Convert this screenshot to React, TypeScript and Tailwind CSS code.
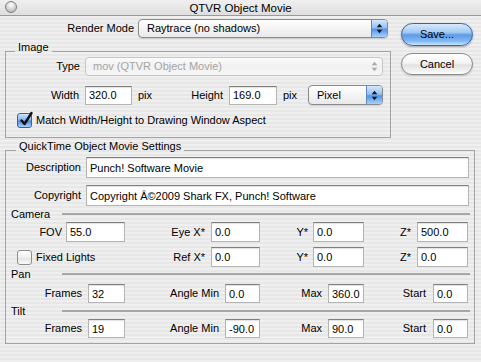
import React from "react";

function Arrows({ disabled }: { disabled?: boolean }) {
  return (
    <svg width="7" height="11" viewBox="0 0 7 11">
      <path d="M3.5 0.8 L6.3 4.2 L0.7 4.2 Z M3.5 10.2 L6.3 6.8 L0.7 6.8 Z" fill={disabled ? "#a9a9a9" : "#151515"} />
    </svg>
  );
}

function Popup({ text, cls, disabled }: { text: string; cls: string; disabled?: boolean }) {
  if (disabled) {
    return (
      <div className={`flex overflow-hidden rounded-[4px] border border-[#c6c6c6] bg-[linear-gradient(180deg,#fbfbfb_0%,#f1f1f1_50%,#f7f7f7_100%)] text-[#a4a4a4] ${cls}`}>
        <div className="flex flex-1 items-center pl-[7px]">{text}</div>
        <div className="flex w-[16px] items-center justify-center">
          <Arrows disabled />
        </div>
      </div>
    );
  }
  return (
    <div className={`flex overflow-hidden rounded-[4px] border border-[#8a8a8a] bg-[linear-gradient(180deg,#ffffff_0%,#f4f4f4_50%,#e9e9e9_100%)] shadow-[0_1px_1px_rgba(0,0,0,0.12)] ${cls}`}>
      <div className="flex flex-1 items-center pl-[8px]">{text}</div>
      <div className="flex w-[16px] items-center justify-center border-l border-[#5f86c2] bg-[linear-gradient(180deg,#d6e8fc_0%,#94c0f3_45%,#5294e8_55%,#a6d2fb_100%)]">
        <Arrows />
      </div>
    </div>
  );
}

function Input({ value, cls }: { value: string; cls: string }) {
  return (
    <input
      readOnly
      defaultValue={value}
      className={`box-border border border-[#b4b4b4] border-t-[#7f7f7f] bg-white pl-[3px] text-[11px] text-black shadow-[inset_0_1px_1px_rgba(0,0,0,0.12)] outline-none ${cls}`}
    />
  );
}

function Check({ checked }: { checked?: boolean }) {
  if (checked) {
    return (
      <div className="relative h-[15px] w-[15px] shrink-0 rounded-[3px] border border-[#3f5f97] bg-[linear-gradient(180deg,#cfe3fb_0%,#86b5ef_45%,#4c8be4_55%,#a8d3fb_100%)]">
        <svg className="absolute left-[1px] top-[-3px]" width="15" height="16" viewBox="0 0 15 16">
          <path d="M2.5 9.5 L5.5 13 L12.5 2" fill="none" stroke="#111" strokeWidth="2.4" strokeLinecap="round" strokeLinejoin="round" />
        </svg>
      </div>
    );
  }
  return (
    <div className="h-[15px] w-[15px] shrink-0 rounded-[3px] border border-[#8d8d8d] bg-[linear-gradient(180deg,#ffffff_0%,#efefef_50%,#e4e4e4_60%,#fafafa_100%)]" />
  );
}

function Field({ label, value, cls }: { label: string; value: string; cls: string }) {
  return (
    <>
      <span>{label}</span>
      <Input value={value} cls={cls} />
    </>
  );
}

function Section({ label }: { label: string }) {
  return (
    <div className="flex h-[14px] items-center">
      <div className="w-[56px] pl-[5px]">{label}</div>
      <div className="mr-[4px] h-[2px] flex-1 bg-[#a6a6a6]" />
    </div>
  );
}

export default function App() {
  return (
    <div className="h-[362px] w-[481px] overflow-hidden bg-[repeating-linear-gradient(180deg,#efefef_0px,#efefef_2px,#e7e7e7_2px,#e7e7e7_4px)] bg-fixed font-['Liberation_Sans',Arial,sans-serif] text-[11px] leading-[13px] text-black">
      {/* Title bar */}
      <div className="relative flex h-[16px] items-center justify-center border-b border-[#9a9a9a] bg-[linear-gradient(180deg,#f0f0f0_0%,#dedede_100%)]">
        <div className="absolute left-[5px] top-[1px] h-[12px] w-[12px] rounded-full border border-[#7f7f7f] bg-[radial-gradient(circle_at_50%_30%,#ffffff_0%,#dadada_45%,#a6a6a6_100%)]" />
        <span className="text-[11.5px] leading-[14px]">QTVR Object Movie</span>
      </div>

      <div className="px-[5px]">
        <div className="flex items-start">
          {/* left column */}
          <div className="w-[386px]">
            <div className="mt-[3px] flex h-[19px] items-center">
              <div className="w-[129px] text-right">Render Mode</div>
              <Popup text="Raytrace (no shadows)" cls="ml-[4px] h-[19px] w-[250px]" />
            </div>

            <fieldset className="mt-[7px] w-[386px] border border-[#a3a3a3] pb-[9px]">
              <legend className="ml-[9px] -translate-y-[4px] px-[3px] leading-[12px]">Image</legend>
              <div className="flex h-[19px] items-center">
                <div className="w-[74px] text-right">Type</div>
                <Popup text="mov (QTVR Object Movie)" cls="ml-[5px] h-[19px] w-[298px]" disabled />
              </div>
              <div className="mt-[9px] flex h-[20px] items-center">
                <div className="w-[73px] text-right">Width</div>
                <Input value="320.0" cls="ml-[6px] h-[19px] w-[47px]" />
                <div className="flex w-[91px] justify-between pl-[6px]">
                  <span>pix</span>
                  <span>Height</span>
                </div>
                <Input value="169.0" cls="ml-[6px] h-[19px] w-[48px]" />
                <div className="w-[31px] pl-[6px]">pix</div>
                <Popup text="Pixel" cls="h-[20px] w-[75px]" />
              </div>
              <div className="mt-[8px] flex h-[15px] items-center pl-[11px]">
                <Check checked />
                <span className="ml-[4px]">Match Width/Height to Drawing Window Aspect</span>
              </div>
            </fieldset>
          </div>

          {/* buttons */}
          <div className="ml-[10px] flex flex-col">
            <div className="mt-[7px] flex h-[23px] w-[72px] items-center justify-center rounded-full border border-[#3b64a6] bg-[linear-gradient(180deg,#d9eafc_0%,#a2c9f4_40%,#5e9be8_52%,#7fb6f2_80%,#c6e5ff_100%)] shadow-[0_1px_2px_rgba(0,0,0,0.3)]">
              Save...
            </div>
            <div className="mt-[7px] flex h-[22px] w-[72px] items-center justify-center rounded-full border border-[#8b8b8b] bg-[linear-gradient(180deg,#ffffff_0%,#f3f3f3_45%,#e2e2e2_55%,#f2f2f2_85%,#ffffff_100%)] shadow-[0_1px_2px_rgba(0,0,0,0.2)]">
              Cancel
            </div>
          </div>
        </div>

        <fieldset className="mt-[6px] w-[470px] border border-[#a3a3a3] pb-[5px]">
          <legend className="ml-[10px] -translate-y-[4px] px-[3px] leading-[12px]">QuickTime Object Movie Settings</legend>
          <div className="mt-[1px] flex h-[21px] items-center">
            <div className="w-[75px] text-right">Description</div>
            <Input value="Punch! Software Movie" cls="ml-[5px] h-[21px] w-[383px]" />
          </div>
          <div className="mt-[7px] flex h-[21px] items-center">
            <div className="w-[75px] text-right">Copyright</div>
            <Input value="Copyright Â©2009 Shark FX, Punch! Software" cls="ml-[5px] h-[21px] w-[383px]" />
          </div>

          <div className="mt-[1px]">
            <Section label="Camera" />
          </div>
          <div className="mt-[1px] flex h-[20px] items-center">
            <div className="flex w-[119px] items-center justify-end gap-[4px]">
              <Field label="FOV" value="55.0" cls="h-[20px] w-[59px]" />
            </div>
            <div className="flex w-[135px] items-center justify-end gap-[6px]">
              <Field label="Eye X*" value="0.0" cls="h-[20px] w-[49px]" />
            </div>
            <div className="flex w-[104px] items-center justify-end gap-[5px]">
              <Field label="Y*" value="0.0" cls="h-[20px] w-[51px]" />
            </div>
            <div className="flex w-[104px] items-center justify-end gap-[6px]">
              <Field label="Z*" value="500.0" cls="h-[20px] w-[51px]" />
            </div>
          </div>
          <div className="mt-[5px] flex h-[20px] items-center">
            <div className="flex w-[119px] items-center pl-[11px]">
              <Check />
              <span className="ml-[4px]">Fixed Lights</span>
            </div>
            <div className="flex w-[135px] items-center justify-end gap-[6px]">
              <Field label="Ref X*" value="0.0" cls="h-[20px] w-[49px]" />
            </div>
            <div className="flex w-[104px] items-center justify-end gap-[5px]">
              <Field label="Y*" value="0.0" cls="h-[20px] w-[51px]" />
            </div>
            <div className="flex w-[104px] items-center justify-end gap-[6px]">
              <Field label="Z*" value="0.0" cls="h-[20px] w-[51px]" />
            </div>
          </div>

          <Section label="Pan" />
          <div className="mt-[3px] flex h-[19px] items-center">
            <div className="flex w-[119px] items-center justify-end gap-[6px]">
              <Field label="Frames" value="32" cls="h-[19px] w-[37px]" />
            </div>
            <div className="flex w-[135px] items-center justify-end gap-[6px]">
              <Field label="Angle Min" value="0.0" cls="h-[19px] w-[35px]" />
            </div>
            <div className="flex w-[104px] items-center justify-end gap-[6px]">
              <Field label="Max" value="360.0" cls="h-[19px] w-[36px]" />
            </div>
            <div className="flex w-[104px] items-center justify-end gap-[7px]">
              <Field label="Start" value="0.0" cls="h-[19px] w-[35px]" />
            </div>
          </div>

          <div className="mt-[1px]">
            <Section label="Tilt" />
          </div>
          <div className="mt-[1px] flex h-[19px] items-center">
            <div className="flex w-[119px] items-center justify-end gap-[6px]">
              <Field label="Frames" value="19" cls="h-[19px] w-[37px]" />
            </div>
            <div className="flex w-[135px] items-center justify-end gap-[6px]">
              <Field label="Angle Min" value="-90.0" cls="h-[19px] w-[35px]" />
            </div>
            <div className="flex w-[104px] items-center justify-end gap-[6px]">
              <Field label="Max" value="90.0" cls="h-[19px] w-[36px]" />
            </div>
            <div className="flex w-[104px] items-center justify-end gap-[7px]">
              <Field label="Start" value="0.0" cls="h-[19px] w-[35px]" />
            </div>
          </div>
        </fieldset>
      </div>
    </div>
  );
}
